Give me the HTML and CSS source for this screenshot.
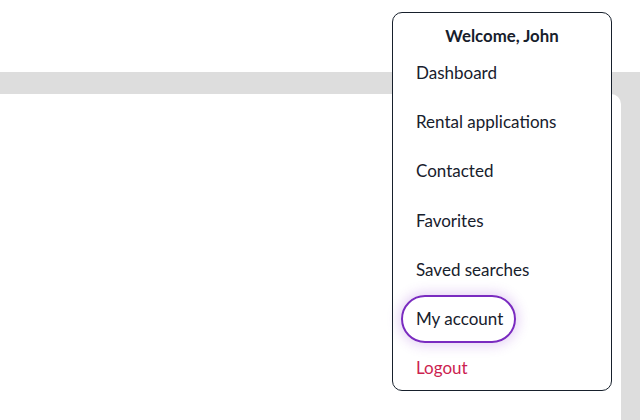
FILE: index.html
```html
<!DOCTYPE html>
<html>
<head>
<meta charset="utf-8">
<link rel="stylesheet" href="styles.css">
</head>
<body>
<header class="topbar"></header>
<main class="stage">
  <div class="panel"></div>
</main>
<nav class="menu">
  <div class="menu-title">Welcome, John</div>
  <ul class="menu-list">
    <li class="menu-item"><span class="menu-link">Dashboard</span></li>
    <li class="menu-item"><span class="menu-link">Rental applications</span></li>
    <li class="menu-item"><span class="menu-link">Contacted</span></li>
    <li class="menu-item"><span class="menu-link">Favorites</span></li>
    <li class="menu-item"><span class="menu-link">Saved searches</span></li>
    <li class="menu-item"><span class="menu-link is-focused">My account</span></li>
    <li class="menu-item"><span class="menu-link is-danger">Logout</span></li>
  </ul>
</nav>
</body>
</html>
```
FILE: styles.css
```css
html, body {
  margin: 0;
  padding: 0;
  height: 100%;
  background: #ffffff;
  font-family: "Lato", "Noto Sans", sans-serif;
  color: #17202c;
}
body {
  display: flex;
  flex-direction: column;
  overflow: hidden;
}
.topbar {
  height: 72px;
  flex: none;
  background: #ffffff;
}
.stage {
  flex: 1;
  background: #dddddd;
  padding: 22px 19px 0 0;
  display: flex;
}
.panel {
  flex: 1;
  background: #ffffff;
  border-top-right-radius: 10px;
}
.menu {
  position: absolute;
  left: 392px;
  top: 12px;
  width: 218px;
  height: 377px;
  border: 1px solid #17202c;
  border-radius: 10px;
  background: #ffffff;
  box-sizing: content-box;
}
.menu-title {
  padding-top: 10px;
  height: 25px;
  line-height: 25px;
  text-align: center;
  font-weight: 700;
  font-size: 16.8px;
}
.menu-list {
  list-style: none;
  margin: 0;
  padding: 0 8px;
}
.menu-item {
  height: 49.2px;
  display: flex;
  align-items: center;
  font-size: 17px;
}
.menu-link {
  display: inline-flex;
  align-items: center;
  height: 44px;
  padding: 0 11px 0 13px;
  border: 2px solid transparent;
  border-radius: 24px;
}
.menu-link.is-focused {
  border-color: #7a2bc0;
  box-shadow: 0 0 12px 3px rgba(140, 60, 210, 0.22);
}
.menu-link.is-danger {
  color: #cc2250;
}
```
